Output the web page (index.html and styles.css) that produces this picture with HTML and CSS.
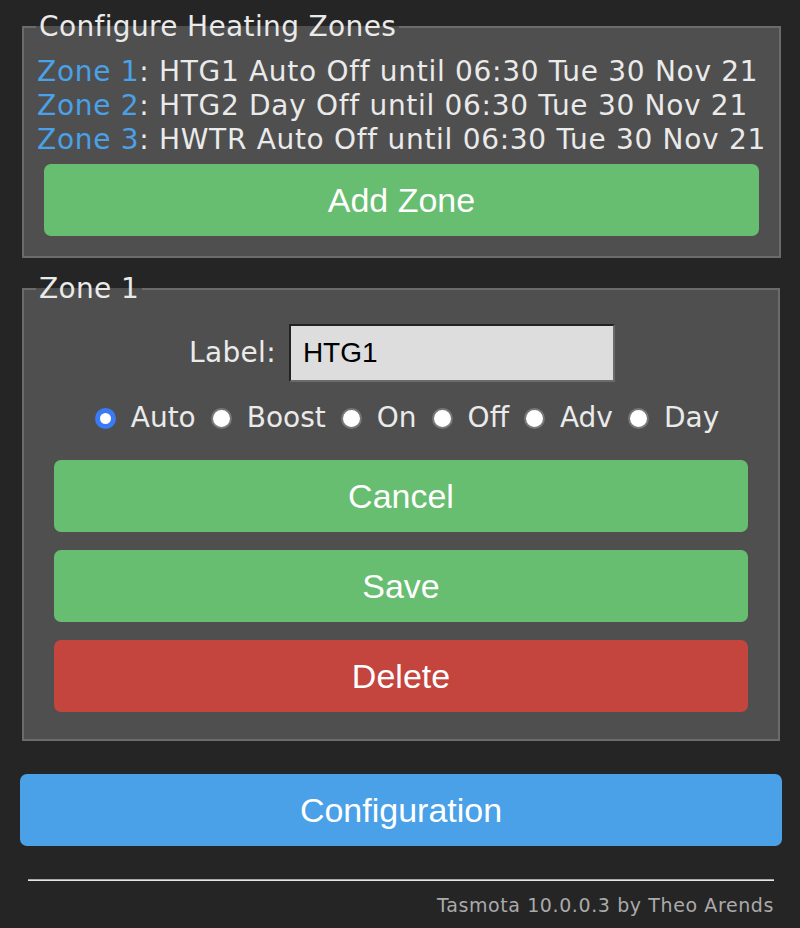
FILE: index.html
```html
<!DOCTYPE html>
<html lang="en">
<head>
<meta charset="utf-8">
<title>Configure Heating Zones</title>
<link rel="stylesheet" href="styles.css">
</head>
<body>
<div class="page">
  <fieldset class="box box-zones">
    <legend>Configure Heating Zones</legend>
    <div class="zone-list">
      <div class="zone-line"><a class="zone-link" href="#">Zone 1</a>: HTG1 Auto Off until 06:30 Tue 30 Nov 21</div>
      <div class="zone-line"><a class="zone-link" href="#">Zone 2</a>: HTG2 Day Off until 06:30 Tue 30 Nov 21</div>
      <div class="zone-line"><a class="zone-link" href="#">Zone 3</a>: HWTR Auto Off until 06:30 Tue 30 Nov 21</div>
    </div>
    <div class="btn-wrap btn-wrap-narrow">
      <button class="btn btn-green" type="button">Add Zone</button>
    </div>
  </fieldset>

  <fieldset class="box box-zone">
    <legend>Zone 1</legend>
    <div class="label-row">
      <label class="label-text" for="zlabel">Label:</label>
      <input class="text-input" id="zlabel" type="text" value="HTG1">
    </div>
    <div class="radio-row">
      <label class="radio-item"><input class="radio" type="radio" name="mode" checked><span>Auto</span></label>
      <label class="radio-item"><input class="radio" type="radio" name="mode"><span>Boost</span></label>
      <label class="radio-item"><input class="radio" type="radio" name="mode"><span>On</span></label>
      <label class="radio-item"><input class="radio" type="radio" name="mode"><span>Off</span></label>
      <label class="radio-item"><input class="radio" type="radio" name="mode"><span>Adv</span></label>
      <label class="radio-item"><input class="radio" type="radio" name="mode"><span>Day</span></label>
    </div>
    <div class="btn-wrap btn-wrap-wide">
      <button class="btn btn-green" type="button">Cancel</button>
      <button class="btn btn-green" type="button">Save</button>
      <button class="btn btn-red" type="button">Delete</button>
    </div>
  </fieldset>

  <button class="btn btn-blue btn-config" type="button">Configuration</button>

  <hr class="rule">
  <div class="footer">Tasmota 10.0.0.3 by Theo Arends</div>
</div>
</body>
</html>
```

FILE: styles.css
```css
html, body {
  margin: 0;
  padding: 0;
  background: #252525;
}

body {
  font-family: "DejaVu Sans", Verdana, sans-serif;
  font-size: 28px;
  color: #eaeaea;
}

.page {
  width: 762px;
  margin: 0 0 0 20px;
  padding-top: 10px;
}

.box {
  margin: 0 2px;
  border: 2px solid #6b6b6b;
  background: #4f4f4f;
  padding: 0 13px 20px;
}

.box legend {
  padding: 0 3px;
  margin-left: -1px;
  line-height: 34px;
  font-size: 28px;
  letter-spacing: 0.35px;
  color: #eaeaea;
}

.box-zone {
  margin-top: 14px;
  padding-bottom: 27px;
}

.zone-list {
  padding-top: 11px;
}

.zone-line {
  line-height: 34px;
  white-space: nowrap;
  letter-spacing: 0.7px;
}

.zone-link {
  color: #4aa1e7;
  text-decoration: none;
}

.btn-wrap {
  display: flex;
  flex-direction: column;
}

.btn-wrap-narrow {
  margin: 7px 7px 0;
}

.btn-wrap-wide {
  margin: 25px 17px 0;
  gap: 18px;
}

.btn {
  display: block;
  width: 100%;
  height: 72px;
  border: 0;
  border-radius: 7px;
  font-family: "Liberation Sans", Arial, sans-serif;
  font-size: 34px;
  color: #ffffff;
  padding: 0;
  cursor: pointer;
}

.btn-green {
  background: #67bd70;
}

.btn-red {
  background: #c4443e;
}

.btn-blue {
  background: #4aa1e7;
}

.btn-config {
  margin-top: 33px;
}

.label-row {
  display: flex;
  justify-content: center;
  align-items: center;
  gap: 13px;
  padding-top: 18px;
  padding-left: 2px;
}

.label-text {
  line-height: 34px;
  letter-spacing: 0.3px;
}

.text-input {
  box-sizing: border-box;
  width: 326px;
  height: 58px;
  margin: 0;
  padding: 0 12px;
  background: #dddddd;
  color: #000000;
  font-family: "Liberation Sans", Arial, sans-serif;
  font-size: 28px;
  border-style: solid;
  border-width: 2px;
  border-color: #222222 #6b6b6b #6b6b6b #222222;
  outline: none;
}

.radio-row {
  display: flex;
  justify-content: center;
  align-items: center;
  gap: 15px;
  margin-top: 19px;
  padding-left: 12px;
  line-height: 34px;
}

.radio-item {
  display: flex;
  align-items: center;
  gap: 15px;
}

.radio {
  appearance: none;
  -webkit-appearance: none;
  box-sizing: border-box;
  width: 21px;
  height: 21px;
  margin: 0;
  border-radius: 50%;
  background: #ffffff;
  border: 2px solid #777777;
}

.radio:checked {
  border: 5px solid #3b7af5;
  background: #ffffff;
}

.rule {
  margin: 33px 8px 0;
  height: 0;
  border: 0;
  border-top: 1px solid #a8a8a8;
  border-bottom: 1px solid #e6e6e6;
}

.footer {
  margin-top: 13px;
  padding-right: 8px;
  text-align: right;
  font-size: 19px;
  letter-spacing: 0.6px;
  color: #aaaaaa;
}
```
